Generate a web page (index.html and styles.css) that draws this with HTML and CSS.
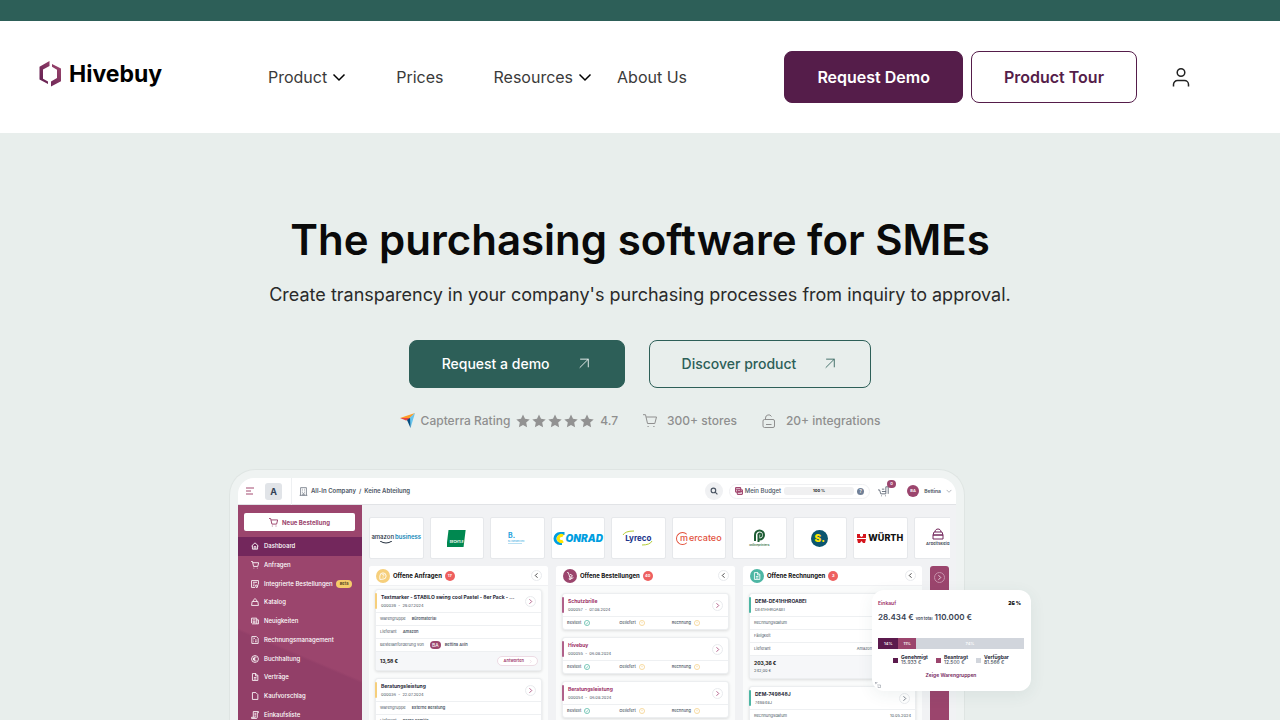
FILE: index.html
```html
<!DOCTYPE html>
<html lang="en">
  <head>
    <meta charset="UTF-8" />
    <meta name="viewport" content="width=device-width, initial-scale=1.0" />
    <title>Hivebuy | The purchasing software for SMEs</title>
    <link rel="stylesheet" href="styles.css">
  </head>
  <body>
    <svg class="sprite" aria-hidden="true">
      <symbol id="chev" viewBox="0 0 14 14"><path d="M1.500 4.500L7 10l5.500-5.500"/></symbol>
      <symbol id="right" viewBox="0 0 14 14"><path d="M5 2.500L9.500 7 5 11.500"/></symbol>
      <symbol id="left" viewBox="0 0 14 14"><path d="M9 2.500L4.500 7 9 11.500"/></symbol>
      <symbol id="arrow" viewBox="0 0 14 14"><path d="M2 12.500L12 2.500M2.500 2.500H12V12"/></symbol>
      <symbol id="star" viewBox="0 0 14 14"><path d="M7 .5l2 4.300 4.700.6-3.500 3.200.9 4.700L7 11l-4.100 2.300.9-4.700L.3 5.400 5 4.800z"/></symbol>
      <symbol id="cart" viewBox="0 0 14 14"><path d="M0 .7h2.500l2 8.800h7.300l1.700-6.500H3.200"/><path d="M4.500 12.500h1.200M10.300 12.500h1.200"/></symbol>
      <symbol id="lock" viewBox="0 0 14 14"><rect x="1" y="5.500" width="11.500" height="8" rx="1.500"/><path d="M3.500 5.500V4a3.200 3.200 0 0 1 6-1.500M4 10.500h5.500"/></symbol>
      <symbol id="home" viewBox="0 0 14 14"><path d="M1 7l6-5.500L13 7M2.500 6v6.500h9V6M5.500 12.500V8h3v4.500"/></symbol>
      <symbol id="bag" viewBox="0 0 14 14"><path d="M2 6h10l1 7H1zM4 6c0-6 6-6 6 0"/></symbol>
      <symbol id="news" viewBox="0 0 14 14"><path d="M1 2h9v10H2.500L1 10.500zM10 5h3v7h-3M3 5h5M3 7.500h5M3 10h5"/></symbol>
      <symbol id="doc" viewBox="0 0 14 14"><path d="M2.500 1h6L12 4.500V13H2.500zM8 1v4h4M5 8h4.500M5 10.500h4.500"/></symbol>
      <symbol id="page" viewBox="0 0 14 14"><path d="M2.500 1h6L12 4.500V13H2.500z"/></symbol>
      <symbol id="form" viewBox="0 0 14 14"><path d="M1 1h12v7M1 1v12h6M3.500 4h7M3.500 7h3M3.500 10H6M8 9h4l-1 4H9z"/></symbol>
      <symbol id="bill" viewBox="0 0 14 14"><path d="M1.500 1h8L12.500 4v9h-11zM4 4h3M4 7h1M7 7h3M4 10h1M7 10h3"/></symbol>
      <symbol id="coin" viewBox="0 0 14 14"><circle cx="7" cy="7" r="6"/><path d="M9.500 4.500a3.300 3.300 0 1 0 0 5M3.500 6.200h4M3.500 8h4"/></symbol>
      <symbol id="list" viewBox="0 0 14 14"><path d="M4 11V1h9v2h-2v8a2 2 0 0 1-2 2H1v-2h7M6 4h3M6 6.500h3M6 9h3"/></symbol>
      <symbol id="ask" viewBox="0 0 14 14"><path d="M1.500 13V7A5.500 5.500 0 1 1 7 12.500zM5.300 5.500c0-2.500 3.700-2.300 3.500 0C8.700 6.800 7 6.800 7 8M7 9.500v1"/></symbol>
      <symbol id="hand" viewBox="0 0 14 14"><path d="M2 1h2l3 9M7 4l4 2-1.500 3.500L6 8M8 12l5-2"/><circle cx="7" cy="12" r="1.500"/></symbol>
      <symbol id="tick" viewBox="0 0 14 14"><circle cx="7" cy="7" r="6"/><path d="M4 7l2 2 4-4"/></symbol>
      <symbol id="wait" viewBox="0 0 14 14"><circle cx="7" cy="7" r="6"/><path d="M7 4v3.500M7 9.500v.5"/></symbol>
      <symbol id="building" viewBox="0 0 14 14"><path d="M2.500 13V1h9v12M1 13h12M5 3.500h1M8 3.500h1M5 6h1M8 6h1M5 8.500h1M8 8.500h1M6 13v-2.500h2V13"/></symbol>
    </svg>

    <div class="topline"></div>
    <header class="header">
      <a class="logo" href="#">
        <svg width="24" height="26" viewBox="0 0 24 26">
          <defs>
            <linearGradient id="hive" x1="0" y1="1" x2="1" y2="0">
              <stop offset="0" stop-color="#5b1a4d"/><stop offset="1" stop-color="#a34a71"/>
            </linearGradient>
          </defs>
          <path fill="url(#hive)" d="M11.500 0v5L5 8.500v9.200l5 2.800v2.500L1.500 18.500V5.800zM14 3l9 4.500v12.800L13 25.500v-5l6-3.500V8.800l-5-3z"/>
        </svg>
        <span>Hivebuy</span>
      </a>
      <nav class="nav">
        <a href="#">Product <svg class="ico"><use href="#chev"/></svg></a>
        <a href="#">Prices</a>
        <div class="nav-group">
          <a href="#">Resources <svg class="ico"><use href="#chev"/></svg></a>
          <a href="#">About Us</a>
        </div>
      </nav>
      <div class="actions">
        <button class="btn btn-purple">Request Demo</button>
        <button class="btn btn-line">Product Tour</button>
        <a class="user" href="#" aria-label="Login">
          <svg width="20" height="20" viewBox="0 0 20 20"><circle cx="10" cy="5.500" r="3.800"/><path d="M2.500 19.500v-2a4 4 0 0 1 4-4h7a4 4 0 0 1 4 4v2"/></svg>
        </a>
      </div>
    </header>

    <main class="hero">
      <h1>The purchasing software for SMEs</h1>
      <p class="lead">Create transparency in your company's purchasing processes from inquiry to approval.</p>
      <div class="cta">
        <button class="cta-btn cta-full">Request a demo <svg class="ico"><use href="#arrow"/></svg></button>
        <button class="cta-btn">Discover product <svg class="ico"><use href="#arrow"/></svg></button>
      </div>
      <div class="facts">
        <div class="rating">
          <svg width="15" height="15" viewBox="0 0 15 15">
            <path fill="#ff9d28" d="M0 5l15-5-5 5z"/><path fill="#e54747" d="M0 5h10v1.500L6 7.500z"/>
            <path fill="#68c5ed" d="M15 0l-4.500 15-1-10z"/><path fill="#044d80" d="M10 5l.5 10L7 7z"/>
          </svg>
          <span>Capterra Rating</span>
          <div class="stars">
            <svg><use href="#star"/></svg><svg><use href="#star"/></svg><svg><use href="#star"/></svg><svg><use href="#star"/></svg><svg><use href="#star"/></svg>
          </div>
          <span>4.7</span>
        </div>
        <div class="fact"><svg class="ico"><use href="#cart"/></svg>300+ stores</div>
        <div class="fact"><svg class="ico"><use href="#lock"/></svg>20+ integrations</div>
      </div>

      <div class="preview">
        <div class="frame">
          <div class="app">
            <div class="bar">
              <svg class="menu" width="9" height="8" viewBox="0 0 9 8"><path d="M0 1h8M0 4h5M0 7h7"/></svg>
              <span class="initial">A</span>
              <div class="crumb"><svg class="ico"><use href="#building"/></svg>All-In Company&nbsp; /&nbsp; Keine Abteilung</div>
              <span class="search"><svg width="8" height="8" viewBox="0 0 14 14"><circle cx="6" cy="6" r="4"/><path d="M9 9l4 4"/></svg></span>
              <div class="budget">
                <svg width="8" height="8" viewBox="0 0 14 14"><rect x="1" y="1" width="9" height="8" rx="1"/><rect x="4" y="5" width="9" height="8" rx="1"/><path d="M1 4h9M4 8h9"/></svg>
                Mein Budget
                <span class="meter">100 %</span>
                <span class="help">?</span>
              </div>
              <div class="basket"><svg width="11" height="11" viewBox="0 0 14 14"><path d="M0 5h2l1.500 5H10V1h3v9M5 7h5M5 4h3M4 12.500h1M9 12.500h1"/></svg><span class="count">0</span></div>
              <div class="me"><span class="avatar">BA</span>Bettina <svg class="ico"><use href="#chev"/></svg></div>
            </div>
            <div class="body">
              <aside class="side">
                <button class="new"><svg class="ico"><use href="#cart"/></svg>Neue Bestellung</button>
                <ul>
                  <li class="on"><svg class="ico"><use href="#home"/></svg>Dashboard</li>
                  <li><svg class="ico"><use href="#cart"/></svg>Anfragen</li>
                  <li><svg class="ico"><use href="#form"/></svg>Integrierte Bestellungen <span class="beta">Beta</span></li>
                  <li><svg class="ico"><use href="#bag"/></svg>Katalog</li>
                  <li><svg class="ico"><use href="#news"/></svg>Neuigkeiten</li>
                  <li><svg class="ico"><use href="#bill"/></svg>Rechnungsmanagement</li>
                  <li><svg class="ico"><use href="#coin"/></svg>Buchhaltung</li>
                  <li><svg class="ico"><use href="#doc"/></svg>Verträge</li>
                  <li><svg class="ico"><use href="#page"/></svg>Kaufvorschlag</li>
                  <li><svg class="ico"><use href="#list"/></svg>Einkaufsliste</li>
                </ul>
              </aside>
              <div class="work">
                <div class="shops">
                  <div class="shop amazon"><p><b>amazon</b> business</p><svg width="14" height="3" viewBox="0 0 14 3"><path d="M1 0q6 4 12 0"/></svg></div>
                  <div class="shop"><span class="bechtle">BECHTLE</span></div>
                  <div class="shop blum"><b>B.</b><span>BLUMENBECKER</span><i></i></div>
                  <div class="shop conrad"><svg width="13" height="13" viewBox="0 0 13 13"><path d="M11.500 1.500H7a5 5 0 0 0 0 10h2" stroke="#009ee0"/><path d="M10 4a3 3 0 1 0 0 5" stroke="#ffe600"/></svg><b>ONRAD</b></div>
                  <div class="shop lyreco"><svg width="32" height="16" viewBox="0 0 32 16"><path d="M1 5Q3 1 12 1M20 15q8 0 10-4"/></svg><b>Lyreco</b></div>
                  <div class="shop mercateo"><span class="ring">m</span>ercateo</div>
                  <div class="shop printers"><svg width="14" height="14" viewBox="0 0 14 14"><path d="M3 12V6a4.500 4.500 0 1 1 4.500 4.500M6.500 13V6.500a1.500 1.500 0 1 1 1.500 1"/></svg><span>onlineprinters</span></div>
                  <div class="shop"><span class="sdot">S.</span></div>
                  <div class="shop wurth"><svg width="9" height="9" viewBox="0 0 9 9"><path d="M0 0h3v2l1.500 1L6 2V0h3v4H0zM0 5h9L8 9H6L4.500 7 3 9H1z"/></svg><b>WÜRTH</b></div>
                  <div class="shop clothes"><svg width="12" height="12" viewBox="0 0 12 12"><path d="M3 4c0-4 6-4 6 0M2 4h8l1 3H1zM1 7h10v4H1z"/></svg><span>Arbeitskleid</span></div>
                </div>
                <div class="panels">
                  <section class="panel yellow">
                    <div class="phead"><span class="pico"><svg class="ico"><use href="#ask"/></svg></span>Offene Anfragen<span class="num">17</span><span class="round"><svg class="ico"><use href="#left"/></svg></span></div>
                    <div class="card">
                      <div class="chead"><div><h4>Textmarker - STABILO swing cool Pastel - 8er Pack - ...</h4><p>000039 &nbsp;-&nbsp; 29.07.2024</p></div><span class="round"><svg class="ico"><use href="#right"/></svg></span></div>
                      <div class="row">Warengruppe <b>Büromaterial</b></div>
                      <div class="row">Lieferant <b>Amazon</b></div>
                      <div class="row">Bestellanforderung von <span class="avatar">BA</span><b class="who">Bettina Allin</b></div>
                      <div class="cfoot"><strong>13,58 €</strong><span class="answer">Antworten <svg class="ico"><use href="#right"/></svg></span></div>
                    </div>
                    <div class="card">
                      <div class="chead"><div><h4>Beratungsleistung</h4><p>000036 &nbsp;-&nbsp; 22.07.2024</p></div><span class="round"><svg class="ico"><use href="#right"/></svg></span></div>
                      <div class="row">Warengruppe <b>Externe Beratung</b></div>
                      <div class="row">Lieferant <b>Berns Familie</b></div>
                    </div>
                  </section>
                  <section class="panel plum">
                    <div class="phead"><span class="pico"><svg class="ico"><use href="#hand"/></svg></span>Offene Bestellungen<span class="num">40</span><span class="round"><svg class="ico"><use href="#left"/></svg></span></div>
                    <div class="card">
                      <div class="chead"><div><h4>Schutzbrille</h4><p>000057 &nbsp;-&nbsp; 07.08.2024</p></div><span class="round"><svg class="ico"><use href="#right"/></svg></span></div>
                      <div class="states"><span>Bestellt <svg class="ico ok"><use href="#tick"/></svg></span><span>Geliefert <svg class="ico"><use href="#wait"/></svg></span><span>Rechnung <svg class="ico"><use href="#wait"/></svg></span></div>
                    </div>
                    <div class="card">
                      <div class="chead"><div><h4>Hivebuy</h4><p>000055 &nbsp;-&nbsp; 06.08.2024</p></div><span class="round"><svg class="ico"><use href="#right"/></svg></span></div>
                      <div class="states"><span>Bestellt <svg class="ico ok"><use href="#tick"/></svg></span><span>Geliefert <svg class="ico"><use href="#wait"/></svg></span><span>Rechnung <svg class="ico"><use href="#wait"/></svg></span></div>
                    </div>
                    <div class="card">
                      <div class="chead"><div><h4>Beratungsleistung</h4><p>000054 &nbsp;-&nbsp; 06.08.2024</p></div><span class="round"><svg class="ico"><use href="#right"/></svg></span></div>
                      <div class="states"><span>Bestellt <svg class="ico ok"><use href="#tick"/></svg></span><span>Geliefert <svg class="ico"><use href="#wait"/></svg></span><span>Rechnung <svg class="ico"><use href="#wait"/></svg></span></div>
                    </div>
                  </section>
                  <section class="panel teal">
                    <div class="phead"><span class="pico"><svg class="ico"><use href="#doc"/></svg></span>Offene Rechnungen<span class="num">3</span><span class="round"><svg class="ico"><use href="#left"/></svg></span></div>
                    <div class="card">
                      <div class="chead"><div><h4>DEM-DE41HHROABEI</h4><p>DE41HHROABEI</p></div></div>
                      <div class="row">Rechnungsdatum</div>
                      <div class="row">Fälligkeit</div>
                      <div class="row supplier">Lieferant <span>Amazon</span></div>
                      <div class="cfoot sum"><strong>203,36 €</strong><span>242,00 €</span></div>
                    </div>
                    <div class="card">
                      <div class="chead"><div><h4>DEM-749848J</h4><p>749848J</p></div><span class="round"><svg class="ico"><use href="#right"/></svg></span></div>
                      <div class="row split">Rechnungsdatum <span>10.05.2024</span></div>
                    </div>
                  </section>
                  <div class="strip"><span class="round"><svg class="ico"><use href="#right"/></svg></span></div>
                </div>
              </div>
            </div>
          </div>
        </div>

        <div class="spend">
          <div class="spend-top"><span>Einkauf</span><b>26 %</b></div>
          <p class="total">28.434 € <small>von total</small> 110.000 €</p>
          <div class="split-bar"><span style="width: 14%">14%</span><span style="width: 12%">11%</span><span style="width: 74%">74%</span></div>
          <div class="legend">
            <div><i></i><p><b>Genehmigt</b>15.933 €</p></div>
            <div><i></i><p><b>Beantragt</b>12.500 €</p></div>
            <div><i></i><p><b>Verfügbar</b>81.566 €</p></div>
          </div>
          <a href="#">Zeige Warengruppen</a>
          <svg class="swap" width="6" height="6" viewBox="0 0 14 14"><path d="M1 5V1h5M1 1l3 3M5 7h8v6H7v-3"/></svg>
        </div>
      </div>
    </main>
  </body>
</html>
```
FILE: styles.css
```css
* {
  margin: 0;
  padding: 0;
  box-sizing: border-box;
}
body {
  height: 100vh;
  display: flex;
  flex-direction: column;
  overflow: hidden;
  font-family: Inter, "Liberation Sans", sans-serif;
  color: #0a0a0a;
  background: #e8eeec;
}
a {
  color: inherit;
  text-decoration: none;
}
button {
  font-family: inherit;
  cursor: pointer;
}
ul {
  list-style: none;
}
svg {
  flex: none;
}
.sprite {
  display: none;
}
.ico {
  width: 14px;
  height: 14px;
  fill: none;
  stroke: currentColor;
}

/* header */
.topline {
  flex: none;
  height: 21px;
  background: #2d5f58;
}
.header {
  flex: none;
  height: 112px;
  padding: 0 89px 0 38px;
  display: flex;
  align-items: center;
  background: #fff;
}
.logo {
  width: 124px;
  display: flex;
  align-items: center;
  gap: 7px;
  padding-bottom: 6px;
  font-size: 23px;
  line-height: 26px;
  font-weight: 700;
  color: #000;
}
.nav {
  margin-left: 106px;
  display: flex;
  gap: 50px;
  font-size: 16px;
  color: #3a3a3a;
}
.nav a {
  display: flex;
  align-items: center;
  gap: 5px;
  white-space: nowrap;
}
.nav .ico {
  stroke: #000;
  stroke-width: 1.5;
}
.nav-group {
  display: flex;
  gap: 25px;
}
.actions {
  margin-left: auto;
  display: flex;
  align-items: center;
  gap: 8px;
}
.btn {
  height: 52px;
  padding: 0 32px;
  border: 1px solid #551d4a;
  border-radius: 8px;
  font-size: 16px;
  font-weight: 600;
  white-space: nowrap;
}
.btn-purple {
  background: #551d4a;
  color: #fff;
}
.btn-line {
  background: #fff;
  color: #551d4a;
}
.user {
  display: flex;
  margin-left: 26px;
}
.user svg {
  fill: none;
  stroke: #222;
  stroke-width: 1.5;
}

/* hero */
.hero {
  flex: 1;
  min-height: 0;
  padding-top: 80px;
  display: flex;
  flex-direction: column;
  align-items: center;
}
h1 {
  font-size: 42px;
  line-height: 54px;
  font-weight: 600;
}
.lead {
  margin-top: 14px;
  font-size: 18px;
  line-height: 28px;
  color: #2a2a2a;
}
.cta {
  margin-top: 31px;
  display: flex;
  gap: 24px;
}
.cta-btn {
  height: 48px;
  padding: 0 34px 2px 32px;
  display: flex;
  align-items: center;
  gap: 28px;
  border: 1px solid #2d5f58;
  border-radius: 8px;
  background: none;
  color: #2d5f58;
  font-size: 14px;
  font-weight: 500;
}
.cta-btn .ico {
  width: 12px;
  height: 12px;
}
.cta-full {
  background: #2d5f58;
  color: #fff;
}
.facts {
  margin-top: 25px;
  height: 20px;
  display: flex;
  align-items: center;
  gap: 25px;
  font-size: 12px;
  font-weight: 500;
  color: #8f8f8f;
}
.rating {
  display: flex;
  align-items: center;
  gap: 6px;
}
.stars {
  display: flex;
  gap: 2px;
}
.stars svg {
  width: 14px;
  height: 14px;
  fill: #929292;
}
.fact {
  display: flex;
  align-items: center;
  gap: 10px;
}

/* app preview */
.preview {
  position: relative;
  width: 100%;
  max-width: 822px;
  margin-top: 40px;
  padding-top: 1px;
  font-size: 5px;
  line-height: 8px;
  color: #374151;
}
.frame {
  width: 736px;
  padding: 8px 8px 0;
  border: 1px solid #dfe5e3;
  border-bottom: none;
  border-radius: 26px 26px 0 0;
  background: #eff3f2;
}
.app {
  border-radius: 16px 16px 0 0;
  overflow: hidden;
  background: #f1f2f4;
}
.bar {
  height: 27px;
  padding: 0 4px 0 8px;
  display: flex;
  align-items: center;
  background: #fff;
  border-bottom: 1px solid #e1e3e6;
  font-size: 6px;
  font-weight: 600;
  color: #4b5563;
}
.bar svg {
  fill: none;
  stroke: currentColor;
}
.bar .menu {
  stroke: #a34a71;
}
.initial {
  width: 17px;
  height: 17px;
  margin-left: 10px;
  border-radius: 3px;
  background: #e1e4e8;
  text-align: center;
  font-size: 9px;
  line-height: 17px;
  font-weight: 700;
  color: #334155;
}
.crumb {
  height: 27px;
  margin-left: 9px;
  padding-left: 7px;
  display: flex;
  align-items: center;
  gap: 3px;
  border-left: 1px solid #eef0f2;
}
.crumb .ico {
  width: 9px;
  height: 9px;
}
.search {
  width: 18px;
  height: 18px;
  margin-left: auto;
  display: flex;
  align-items: center;
  justify-content: center;
  border-radius: 50%;
  background: #f0f1f3;
}
.search svg {
  stroke-width: 2;
}
.budget {
  height: 15px;
  margin-left: 6px;
  padding: 0 5px;
  display: flex;
  align-items: center;
  gap: 2px;
  border: 1px solid #eff0f2;
  border-radius: 8px;
  font-weight: 500;
}
.budget svg {
  stroke: #a34a71;
  stroke-width: 2;
}
.meter {
  width: 70px;
  margin-left: 1px;
  border-radius: 3px;
  background: #f0f0f1;
  text-align: center;
  font-size: 4px;
  font-weight: 700;
  color: #111;
}
.help {
  width: 7px;
  height: 7px;
  margin-left: 1px;
  border-radius: 50%;
  background: #718096;
  color: #fff;
  text-align: center;
  font-size: 5px;
  line-height: 7px;
}
.basket {
  position: relative;
  display: flex;
  margin-left: 8px;
}
.count {
  position: absolute;
  left: 9px;
  top: -6px;
  width: 9px;
  height: 8px;
  border-radius: 4px;
  background: #9b456d;
  color: #fff;
  text-align: center;
  font-size: 4px;
}
.me {
  margin-left: 18px;
  display: flex;
  align-items: center;
  gap: 5px;
  font-size: 5px;
}
.avatar {
  padding: 0 2px;
  border-radius: 6px;
  background: #9b456d;
  color: #fff;
  font-size: 5px;
  line-height: 8px;
}
.me .avatar {
  width: 12px;
  text-align: center;
  line-height: 12px;
  font-size: 4px;
}
.me .ico {
  width: 6px;
  height: 6px;
}
.body {
  display: flex;
  height: 240px;
}
.side {
  width: 124px;
  padding-top: 8px;
  background: linear-gradient(203deg, #9b456d 60%, #923f68 61%);
  color: #fff;
}
.new {
  width: 111px;
  height: 18px;
  margin: 0 6px 6px;
  display: flex;
  align-items: center;
  justify-content: center;
  gap: 4px;
  border: none;
  border-radius: 2px;
  background: #fff;
  color: #9b456d;
  font-size: 6px;
  font-weight: 700;
}
.new .ico {
  width: 9px;
  height: 9px;
  stroke-width: 1.5;
}
.side ul {
  height: 187px;
  display: flex;
  flex-direction: column;
}
.side li {
  flex: 1;
  padding-left: 13px;
  display: flex;
  align-items: center;
  gap: 5px;
  font-size: 6px;
  font-weight: 500;
}
.side li .ico {
  width: 8px;
  height: 8px;
  stroke-width: 1.5;
}
.side .on {
  background: #73275c;
}
.beta {
  margin-left: -2px;
  padding: 0 4px;
  border-radius: 4px;
  background: #f5cc6b;
  color: #4b3a1c;
  font-size: 4px;
  font-weight: 600;
}
.work {
  flex: 1;
  min-width: 0;
  margin-right: 6px;
  padding: 12px 0 0 7px;
  overflow: hidden;
}

/* shop tiles */
.shops {
  width: 599px;
  display: grid;
  grid-template-columns: repeat(10, minmax(0, 1fr));
  gap: 6px;
}
.shop {
  height: 42px;
  display: flex;
  align-items: center;
  justify-content: center;
  border: 1px solid #e6e8eb;
  border-radius: 2px;
  background: #fff;
  white-space: nowrap;
}
.shop svg {
  fill: none;
}
.amazon {
  flex-direction: column;
  font-size: 6px;
  font-weight: 600;
  color: #1287b8;
}
.amazon p {
  display: flex;
  gap: 1px;
}
.amazon b {
  font-weight: 500;
  color: #232f3e;
}
.amazon svg {
  margin-right: 20px;
  stroke: #232f3e;
}
.bechtle {
  width: 20px;
  height: 17px;
  padding-top: 10px;
  background: linear-gradient(97deg, transparent 1px, #008850 2px, #008850 18px, transparent 19px);
  color: #fff;
  text-align: center;
  font-size: 3px;
  line-height: 5px;
  font-weight: 700;
}
.blum {
  flex-direction: column;
  align-items: flex-start;
  padding-left: 17px;
  color: #27a3dd;
}
.blum b {
  font-size: 7px;
}
.blum span {
  font-size: 2px;
  line-height: 3px;
}
.blum i {
  width: 14px;
  height: 1px;
  background: #b9e0f2;
}
.conrad {
  color: #009ee0;
  font-size: 10px;
  font-style: italic;
}
.conrad b {
  font-weight: 900;
}
.conrad svg {
  stroke-width: 3;
}
.lyreco {
  position: relative;
  font-size: 8px;
  color: #21348b;
}
.lyreco svg {
  position: absolute;
  stroke: #b5cc35;
}
.mercateo {
  color: #e2513c;
  font-size: 9px;
  font-weight: 500;
}
.ring {
  width: 13px;
  height: 13px;
  border: 1px solid #e2513c;
  border-right-color: transparent;
  border-radius: 50%;
  line-height: 10px;
  text-align: right;
}
.printers {
  flex-direction: column;
  font-size: 3px;
  line-height: 4px;
  font-weight: 600;
  color: #2f6b3a;
}
.printers svg {
  stroke: #1d5c34;
  stroke-width: 2;
}
.sdot {
  width: 17px;
  height: 17px;
  border-radius: 50%;
  background: #0b5670;
  color: #ffe500;
  text-align: center;
  font-size: 10px;
  line-height: 17px;
  font-weight: 900;
}
.wurth {
  gap: 2px;
  color: #111;
  font-size: 9px;
}
.wurth b {
  font-weight: 800;
}
.wurth svg {
  fill: #d5161e;
}
.clothes {
  padding-right: 6px;
  flex-direction: column;
  font-size: 4px;
  font-weight: 600;
}
.clothes svg {
  stroke: #73275c;
}

/* order panels */
.panels {
  margin-top: 7px;
  display: flex;
  gap: 8px;
}
.panel {
  width: 179px;
  flex: none;
  padding-bottom: 20px;
  border-radius: 3px;
  background: #fafbfb;
}
.phead {
  height: 20px;
  padding: 0 6px 0 7px;
  display: flex;
  align-items: center;
  gap: 3px;
  border-bottom: 1px solid #f0f1f3;
  border-radius: 3px 3px 0 0;
  background: #fff;
  font-size: 6px;
  font-weight: 700;
  color: #111;
}
.pico {
  width: 14px;
  height: 14px;
  display: flex;
  align-items: center;
  justify-content: center;
  border-radius: 50%;
  color: #fff;
}
.pico .ico {
  width: 8px;
  height: 8px;
  stroke-width: 1.5;
}
.num {
  width: 10px;
  height: 10px;
  border-radius: 50%;
  background: #ee5f5f;
  color: #fff;
  text-align: center;
  font-size: 4px;
  line-height: 10px;
}
.round {
  width: 11px;
  height: 11px;
  flex: none;
  margin-left: auto;
  display: flex;
  align-items: center;
  justify-content: center;
  border: 1px solid #e9ebee;
  border-radius: 50%;
  background: #fff;
}
.round .ico {
  width: 7px;
  height: 7px;
  stroke-width: 1.5;
}
.yellow .pico { background: #f6cf7c; }
.plum .pico { background: #9b456d; }
.teal .pico { background: #4db6a4; }
.card {
  margin: 7px 6px 0;
  border: 1px solid #eceef0;
  border-radius: 3px;
  background: #fff;
  box-shadow: 0 1px 3px rgba(0, 0, 0, 0.12);
  font-size: 4px;
  color: #4b5563;
}
.yellow .phead + .card {
  margin-top: 3px;
}
.chead {
  position: relative;
  height: 22px;
  padding: 0 5px;
  display: flex;
  align-items: center;
}
.chead::before {
  content: "";
  position: absolute;
  left: -1px;
  top: 3px;
  width: 2px;
  height: 16px;
  border-radius: 1px;
  background: #f6cf7c;
}
.plum .chead::before { background: #b0618a; }
.teal .chead::before { background: #4db6a4; }
.chead h4 {
  font-size: 5px;
  line-height: 9px;
  color: #1f2937;
}
.plum .chead h4,
.yellow .card .round,
.plum .card .round {
  color: #9b2f66;
}
.row {
  height: 13px;
  padding: 0 4px;
  display: flex;
  align-items: center;
  gap: 6px;
  border-top: 1px solid #eef0f2;
}
.row b {
  font-weight: 600;
}
.row .who {
  margin-left: -2px;
}
.split {
  justify-content: space-between;
}
.supplier {
  gap: 86px;
}
.cfoot {
  height: 19px;
  padding: 0 3px 0 4px;
  display: flex;
  align-items: center;
  justify-content: space-between;
  border-top: 1px solid #eef0f2;
  background: #f6f7f9;
}
.cfoot strong {
  font-size: 5px;
  color: #111;
}
.answer {
  padding: 0 4px 0 6px;
  display: flex;
  align-items: center;
  gap: 4px;
  border: 1px solid #eddbe4;
  border-radius: 6px;
  background: #fff;
  color: #9b2f66;
  font-weight: 600;
}
.answer .ico {
  width: 5px;
  height: 5px;
  stroke: #d9b3c6;
}
.sum {
  height: 23px;
  flex-direction: column;
  align-items: flex-start;
  justify-content: center;
}
.states {
  height: 13px;
  padding: 0 4px;
  display: flex;
  align-items: center;
  border-top: 1px solid #eef0f2;
  font-weight: 500;
}
.states span {
  width: 53px;
  display: flex;
  align-items: center;
  gap: 3px;
}
.states .ico {
  width: 6px;
  height: 6px;
  stroke: #f3c877;
  stroke-width: 1.5;
}
.states .ok {
  stroke: #3dae98;
}
.strip {
  width: 19px;
  padding: 6px 4px;
  border-radius: 3px;
  background: #9b456d;
  color: #fff;
}
.strip .round {
  background: none;
  border-color: #c690aa;
}

/* spend card, floats over the app */
.spend {
  position: absolute;
  right: 20px;
  top: 122px;
  width: 159px;
  height: 101px;
  padding: 9px 7px 0 6px;
  border-radius: 12px;
  background: #fff;
  box-shadow: 0 4px 16px rgba(45, 95, 88, 0.08);
}
.spend-top {
  display: flex;
  justify-content: space-between;
  padding-right: 3px;
  color: #9b2f66;
  font-weight: 600;
}
.spend-top b {
  color: #111;
}
.total {
  margin-top: 4px;
  font-size: 8px;
  line-height: 12px;
  font-weight: 600;
}
.total small {
  font-size: 4px;
}
.split-bar {
  margin-top: 13px;
  height: 11px;
  display: flex;
  color: #fff;
  text-align: center;
  font-size: 4px;
  line-height: 11px;
  font-weight: 600;
}
.split-bar span:nth-child(1) { background: #5b1a4d; }
.split-bar span:nth-child(2) { background: #9b456d; }
.split-bar span:nth-child(3) { background: #d1d5dc; }
.legend {
  margin-top: 6px;
  display: flex;
  justify-content: center;
  gap: 8px;
  line-height: 5px;
}
.legend div {
  display: flex;
  align-items: center;
  gap: 3px;
}
.legend b {
  display: block;
  color: #1f2937;
}
.legend i {
  width: 5px;
  height: 5px;
  background: #5b1a4d;
}
.legend div:nth-child(2) i { background: #9b456d; }
.legend div:nth-child(3) i { background: #d1d5dc; }
.spend a {
  display: block;
  margin-top: 6px;
  text-align: center;
  color: #73275c;
  font-weight: 600;
}
.swap {
  position: absolute;
  left: 3px;
  bottom: 3px;
  fill: none;
  stroke: #6b7280;
}
```
